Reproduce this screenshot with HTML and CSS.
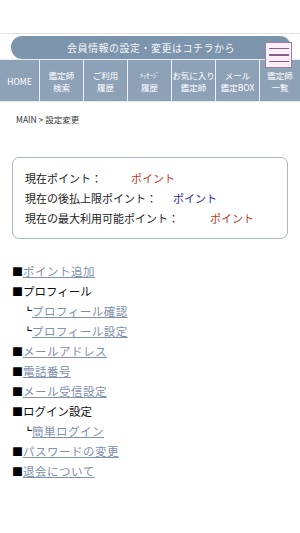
FILE: index.html
```html
<!DOCTYPE html>
<html lang="ja">
<head>
<meta charset="utf-8">
<link rel="stylesheet" href="styles.css">
</head>
<body>
<header class="header">
  <div class="topline"></div>
  <div class="tab">会員情報の設定・変更はコチラから</div>
  <nav class="nav">
    <div class="cell"><span class="ln">HOME</span></div>
    <div class="cell"><span class="ln">鑑定師</span><span class="ln">検索</span></div>
    <div class="cell"><span class="ln">ご利用</span><span class="ln">履歴</span></div>
    <div class="cell"><span class="ln small">ﾒｯｾｰｼﾞ</span><span class="ln">履歴</span></div>
    <div class="cell"><span class="ln">お気に入り</span><span class="ln">鑑定師</span></div>
    <div class="cell"><span class="ln">メール</span><span class="ln">鑑定BOX</span></div>
    <div class="cell last"><span class="ln">鑑定師</span><span class="ln">一覧</span></div>
  </nav>
  <div class="burger"><span></span><span></span><span></span></div>
</header>
<main class="main">
  <p class="crumb">MAIN &gt; 設定変更</p>
  <div class="box">
    <p class="row">現在ポイント：<span class="pt red g1">ポイント</span></p>
    <p class="row">現在の後払上限ポイント：<span class="pt blue g2">ポイント</span></p>
    <p class="row">現在の最大利用可能ポイント：<span class="pt red g3">ポイント</span></p>
  </div>
  <ul class="menu">
    <li><span class="sq">■</span><a href="#">ポイント追加</a></li>
    <li class="head"><span class="sq">■</span>プロフィール</li>
    <li class="sub"><span class="corner">┗</span><a href="#">プロフィール確認</a></li>
    <li class="sub"><span class="corner">┗</span><a href="#">プロフィール設定</a></li>
    <li><span class="sq">■</span><a href="#">メールアドレス</a></li>
    <li><span class="sq">■</span><a href="#">電話番号</a></li>
    <li><span class="sq">■</span><a href="#">メール受信設定</a></li>
    <li class="head"><span class="sq">■</span>ログイン設定</li>
    <li class="sub"><span class="corner">┗</span><a href="#">簡単ログイン</a></li>
    <li><span class="sq">■</span><a href="#">パスワードの変更</a></li>
    <li><span class="sq">■</span><a href="#">退会について</a></li>
  </ul>
</main>
</body>
</html>
```
FILE: styles.css
```css
* { box-sizing: border-box; }
body {
  margin: 0;
  background: #fff;
  font-family: "Noto Sans CJK JP", "Liberation Serif", serif;
  color: #222;
}
.header {
  position: relative;
  padding-top: 33px;
}
.topline {
  height: 2px;
  border-top: 1px solid #e2e4e8;
}
.tab {
  margin: 0 8px 0 10px;
  height: 24px;
  background: #7d94ad;
  border: 1px solid #fff;
  border-bottom: none;
  border-radius: 12px 12px 0 12px;
  color: #f4f6f9;
  font-size: 10px;
  line-height: 23px;
  text-align: center;
  letter-spacing: 0.5px;
}
.nav {
  display: grid;
  grid-template-columns: 40px repeat(5, 44px) 1fr;
  height: 43px;
  background: #8da1b7;
  border-top: 1px solid #e8ecf1;
  border-bottom: 1px solid #e3e7ec;
}
.cell {
  display: flex;
  flex-direction: column;
  align-items: center;
  justify-content: center;
  text-align: center;
  color: #fff;
  font-size: 8.5px;
  line-height: 12px;
  border-right: 1px solid #eef1f5;
  white-space: nowrap;
}
.ln { display: block; height: 12px; }
.cell.last { border-right: none; }
.small { font-size: 6.5px; }
.burger {
  position: absolute;
  left: 265px;
  top: 42px;
  width: 27px;
  height: 26px;
  background: #f8f0f6;
  border: 1px solid #a27aa2;
  display: flex;
  flex-direction: column;
  justify-content: center;
  align-items: center;
  gap: 5px;
}
.burger span {
  display: block;
  width: 20px;
  height: 1.5px;
  background: #8b5d8b;
}
.main { padding: 0 12px; }
.crumb {
  margin: 11px 0 0 4px;
  font-size: 8.5px;
  line-height: 12px;
  color: #333;
}
.box {
  margin-top: 32px;
  border: 1px solid #a9b4c4;
  border-radius: 7px;
  padding: 10px 12px 10px;
}
.row {
  margin: 0;
  font-size: 11px;
  line-height: 20px;
  height: 20px;
  color: #222;
}
.pt { display: inline-block; }
.red { color: #c0392b; }
.blue { color: #2b2ba6; }
.g1 { margin-left: 29px; }
.g2 { margin-left: 16px; }
.g3 { margin-left: 31px; }
.menu {
  list-style: none;
  margin: 22px 0 0;
  padding: 0;
}
.menu li {
  display: flex;
  align-items: center;
  height: 20px;
  font-size: 11.5px;
  line-height: 16px;
  color: #111;
}
.sq {
  display: inline-block;
  width: 11px;
  color: #000;
  font-size: 11px;
}
.menu a {
  color: #8190ab;
  text-decoration: underline;
  letter-spacing: 0.5px;
}
.sub { padding-left: 12px; }
.corner {
  display: inline-block;
  width: 8px;
  font-size: 8px;
  font-weight: bold;
  color: #000;
}
```
